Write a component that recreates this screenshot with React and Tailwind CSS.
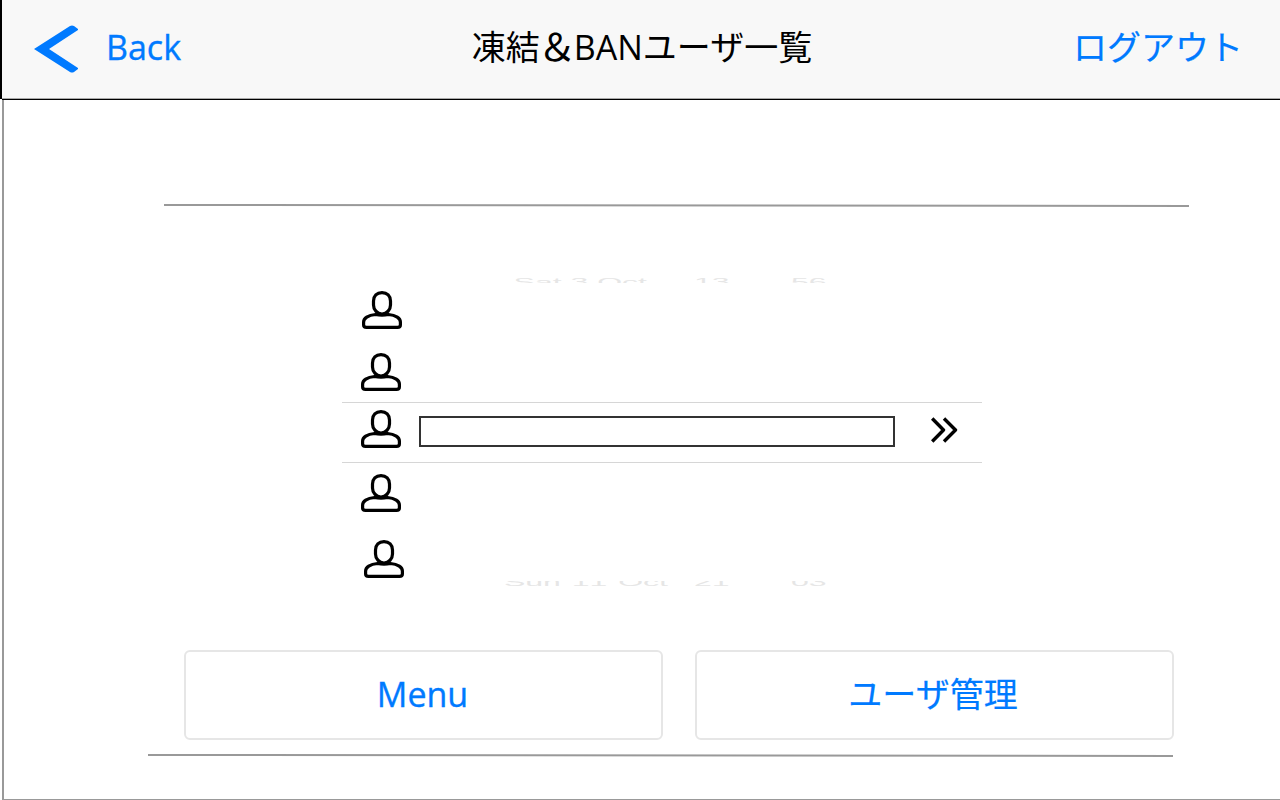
function Person() {
  return (
    <svg width="40" height="38" viewBox="0 0 40 38" fill="none" stroke="#000" strokeWidth="3.2" strokeLinejoin="round" className="block shrink-0">
      <path d="M20 1.6C14.8 1.6 11.500 5 11.500 10V14C11.500 18.500 15 23 20 23S28.500 18.500 28.500 14V10C28.500 5 25.200 1.600 20 1.600Z" />
      <path d="M13.500 23.500C6 24 1.600 27.500 1.600 31V34C1.600 35.700 2.500 36.400 4.500 36.400H35.500C37.500 36.400 38.400 35.700 38.400 34V31C38.400 27.500 34 24 26.500 23.500C23 24.200 17 24.200 13.500 23.500Z" />
    </svg>
  );
}

function Rule() {
  return (
    <svg width="1025" height="4" viewBox="0 0 1025 4" className="block">
      <line x1="0" y1="1" x2="1025" y2="2" stroke="#999" strokeWidth="2" />
    </svg>
  );
}

function WheelText({ day, hour, minute, edge }) {
  const top = edge === "top";
  return (
    <div className={top ? "flex h-[5px] items-start overflow-hidden" : "flex h-[5px] items-end overflow-hidden"}>
      <div className={top
        ? "-mt-[1px] flex h-[32px] w-[512px] shrink-0 origin-top scale-y-[0.35] text-[32px] leading-[32px] text-[#e6e6e6] [font-kerning:none]"
        : "-mb-[2px] flex h-[32px] w-[512px] shrink-0 origin-bottom scale-y-[0.35] text-[32px] leading-[32px] text-[#e6e6e6] [font-kerning:none]"}>
        <span className={top ? "w-[305px] text-right whitespace-nowrap" : "w-[326px] text-right whitespace-nowrap [word-spacing:2px]"}>{day}</span>
        <span className={top ? "ml-[47px] w-[97px]" : "ml-[26px] w-[97px]"}>{hour}</span>
        <span>{minute}</span>
      </div>
    </div>
  );
}

export default function App() {
  return (
    <div className="flex h-[800px] w-[1280px] flex-col overflow-hidden bg-white font-['Open_Sans','Noto_Sans_CJK_JP',sans-serif] text-[34px] leading-[46px]">
      <header className="flex h-[100px] shrink-0">
        <div className="h-[99px] w-[2px] bg-black" />
        <div className="grid flex-1 grid-cols-[439px_402px_437px] items-start border-b border-black bg-[#f8f8f8] pt-[24px] shadow-[inset_0_-1px_0_#aaa]">
          <button className="flex items-start pl-8 text-[#007aff]">
            <svg width="45" height="48" viewBox="0 0 45 48" className="mt-px block" fill="currentColor">
              <path d="M0 24L36 1Q38 0 40 1L44 4V5L15 24L44 43V44L40 47Q38 48 36 47Z" />
            </svg>
            <span className="ml-[27px] [-webkit-text-stroke:0.35px]">Back</span>
          </button>
          <h1 className="text-center whitespace-nowrap text-black">凍結<span className="inline-block scale-x-115 scale-y-110">＆</span>BANユーザ一覧</h1>
          <button className="pr-[37px] text-right text-[#007aff] [-webkit-text-stroke:0.2px]">ログアウト</button>
        </div>
      </header>
      <main className="ml-[2px] flex min-h-0 flex-1 flex-col border-b border-l-2 border-[#999]">
        <div className="ml-[160px] pt-[104px]"><Rule /></div>
        <section className="mt-[70px] ml-[338px] flex h-[308px] w-[640px] flex-col font-['Liberation_Sans',sans-serif]">
          <WheelText day="Sat 3 Oct" hour="13" minute="56" edge="top" />
          <div className="flex h-[119px] flex-col pt-[8px] pl-[19px]">
            <div className="pl-px"><Person /></div>
            <div className="mt-6"><Person /></div>
          </div>
          <div className="flex h-[61px] shrink-0 border-y border-[#d6d6d6] pl-[19px]">
            <div className="pt-[7px]"><Person /></div>
            <input aria-label="ユーザ" className="mt-[13px] ml-[18px] h-[31px] w-[476px] border-2 border-[#333] bg-white text-base outline-none" />
            <svg width="27" height="26" viewBox="0 0 27 26" fill="none" stroke="#000" strokeWidth="3.4" strokeLinejoin="round" className="mt-[14px] ml-[36px] block">
              <path d="M1.200 1.500L12.500 13L1.200 24.500M13 1.500L24.500 13L13 24.500" />
            </svg>
          </div>
          <div className="flex h-[118px] shrink-0 flex-col pt-[11px] pl-[19px]">
            <Person />
            <div className="mt-7 pl-[3px]"><Person /></div>
          </div>
          <WheelText day="Sun 11 Oct" hour="21" minute="03" edge="bottom" />
        </section>
        <div className="mt-[64px] ml-[180px] flex gap-[32px]">
          <button className="h-[90px] w-[479px] rounded-[6px] border-2 border-[#e6e6e6] pr-[2px] pb-[2px] text-[#007aff] [-webkit-text-stroke:0.35px]">Menu</button>
          <button className="h-[90px] w-[479px] rounded-[6px] border-2 border-[#e6e6e6] pr-[3px] pb-[3px] text-[#007aff] [-webkit-text-stroke:0.2px]">ユーザ管理</button>
        </div>
        <div className="mt-[14px] ml-[144px]"><Rule /></div>
      </main>
    </div>
  );
}
